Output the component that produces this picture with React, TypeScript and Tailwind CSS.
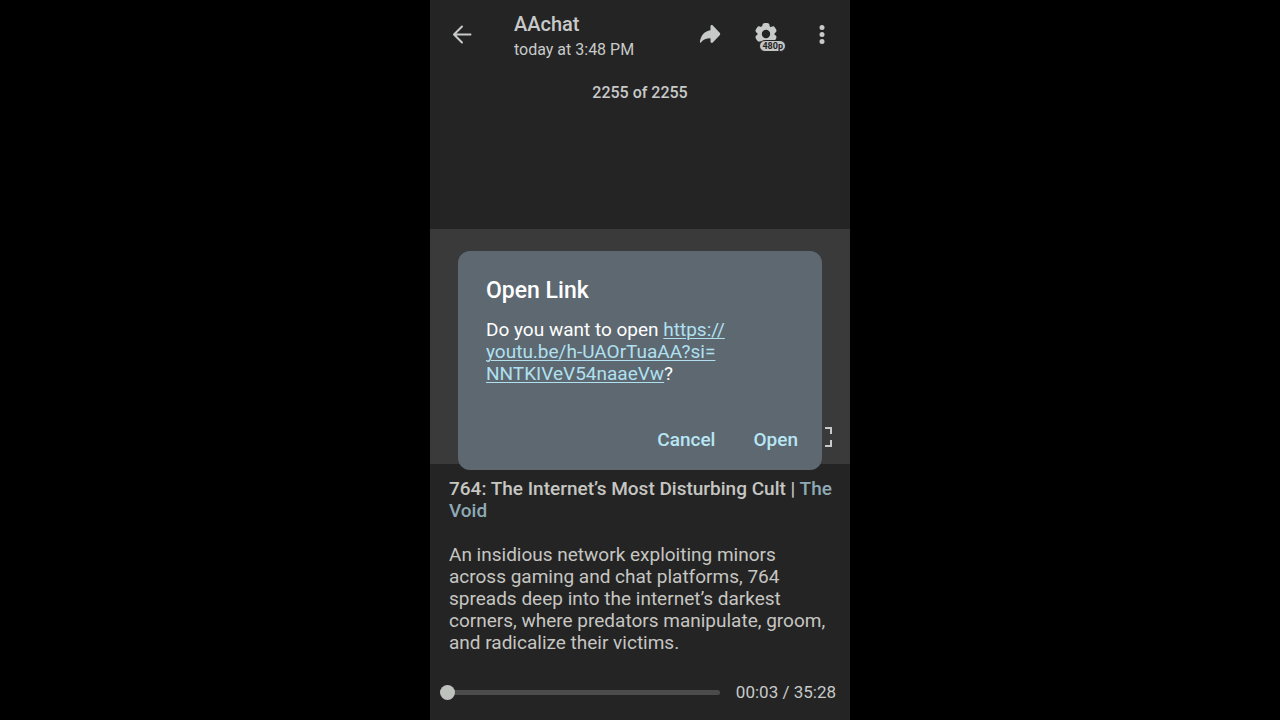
import React, { useState } from 'react';

const DURATION = 35 * 60 + 28;

function formatTime(seconds: number) {
  const m = Math.floor(seconds / 60);
  const s = seconds % 60;
  return `${String(m).padStart(2, '0')}:${String(s).padStart(2, '0')}`;
}

function BackIcon() {
  return (
    <svg width="20" height="20" viewBox="0 0 20 20" fill="none" stroke="currentColor" strokeWidth="2" strokeLinecap="round" strokeLinejoin="round">
      <path d="M18.500 10.500H2.500M10 2.500L2 10.500l8 8" />
    </svg>
  );
}

function ShareIcon() {
  return (
    <svg width="22" height="20" viewBox="0 0 22 20" fill="currentColor">
      <path d="M11.500 2.500c0-1.300 1.400-1.800 2.300-1l6.900 7.300c.7.7.7 1.700 0 2.400l-6.900 7.300c-.9.800-2.300.3-2.300-1v-3.200c-4.300 0-7.300 1.200-9.600 4.200-.4.500-1.100.2-1-.4C1.500 12.300 5 7 11.500 6.200z" />
    </svg>
  );
}

const TEETH = [0, 60, 120, 180, 240, 300];

function GearIcon() {
  return (
    <svg width="24" height="24" viewBox="-12 -12 24 24" fill="currentColor">
      <circle r="6.400" fill="none" stroke="currentColor" strokeWidth="4.400" />
      {TEETH.map((angle) => (
        <rect key={angle} x="-3.600" y="-11" width="7.200" height="6" rx="2.600" transform={`rotate(${angle})`} />
      ))}
    </svg>
  );
}

function MoreIcon() {
  return (
    <svg width="20" height="20" viewBox="0 0 20 20" fill="currentColor">
      <circle cx="10" cy="3.500" r="2.500" />
      <circle cx="10" cy="10.500" r="2.500" />
      <circle cx="10" cy="17.500" r="2.500" />
    </svg>
  );
}

function FullscreenIcon() {
  return (
    <svg width="20" height="20" viewBox="0 0 20 20" fill="none" stroke="currentColor" strokeWidth="2">
      <path d="M1 7V1h6M13 1h6v6M19 13v6h-6M7 19H1v-6" />
    </svg>
  );
}

function Header() {
  const iconButton = 'relative flex h-14 w-14 items-center justify-center';
  return (
    <header className="flex h-[68px] items-center pl-1">
      <button aria-label="Back" className={iconButton}>
        <BackIcon />
      </button>
      <div className="min-w-0 flex-1 pt-1.5 pl-6">
        <h1 className="text-xl leading-[25px] font-medium">AAchat</h1>
        <p className="text-base leading-[25px]">today at 3:48 PM</p>
      </div>
      <button aria-label="Share" className={iconButton}>
        <ShareIcon />
      </button>
      <button aria-label="Video quality" className={iconButton}>
        <GearIcon />
        <span className="absolute right-2 bottom-2.5 rounded-full border border-[#242424] bg-[#c4c6c5] px-0.5 text-[9px] leading-[10px] font-bold text-[#242424]">
          480p
        </span>
      </button>
      <button aria-label="More options" className={iconButton}>
        <MoreIcon />
      </button>
    </header>
  );
}

function Caption() {
  return (
    <section className="pt-3.5 pr-3.5 pb-2.5 pl-[19px] text-[19px] leading-[22px] text-[#c6c6c2]">
      <p className="font-medium">
        764: The Internet’s Most Disturbing Cult | <a href="#the-void" className="text-[#8eaab4]">The Void</a>
      </p>
      <p className="mt-[22px] pr-1">
        An insidious network exploiting minors across gaming and chat platforms, 764 spreads deep into the
        internet’s darkest corners, where predators manipulate, groom, and radicalize their victims.
      </p>
    </section>
  );
}

function PlayerControls() {
  const [time, setTime] = useState(3);
  return (
    <footer className="flex h-14 items-center gap-4 pr-[14px] pl-[10px]">
      <input
        type="range"
        aria-label="Seek"
        min={3}
        max={DURATION}
        value={time}
        onChange={(e) => setTime(Number(e.target.value))}
        className="h-4 min-w-0 flex-1 appearance-none bg-transparent [&::-webkit-slider-runnable-track]:h-[5px] [&::-webkit-slider-runnable-track]:rounded-full [&::-webkit-slider-runnable-track]:bg-[#4b4b4b] [&::-webkit-slider-thumb]:-mt-[5px] [&::-webkit-slider-thumb]:h-[15px] [&::-webkit-slider-thumb]:w-[15px] [&::-webkit-slider-thumb]:appearance-none [&::-webkit-slider-thumb]:rounded-full [&::-webkit-slider-thumb]:bg-[#bfc1bf]"
      />
      <span className="text-[17px] leading-[22px]">
        {formatTime(time)} / {formatTime(DURATION)}
      </span>
    </footer>
  );
}

function OpenLinkDialog({ onClose }: { onClose: () => void }) {
  return (
    <div className="absolute inset-0 flex items-center justify-center px-7 pt-px">
      <div
        role="dialog"
        aria-labelledby="open-link-title"
        className="w-full rounded-xl bg-[#5d6871] pt-6 pb-2.5 text-white"
      >
        <h2 id="open-link-title" className="px-7 text-[23px] leading-8 font-medium">
          Open Link
        </h2>
        <p className="mt-3 px-7 text-[19px] leading-[22px]">
          Do you want to open{' '}
          <a href="https://youtu.be/h-UAOrTuaAA?si=NNTKIVeV54naaeVw" className="text-[#b0e0f0] underline decoration-1 underline-offset-2">
            https://
            <br />
            youtu.be/h-UAOrTuaAA?si=
            <br />
            NNTKIVeV54naaeVw
          </a>
          ?
        </p>
        <div className="mt-[35px] flex justify-end gap-3.5 pr-3 text-[19px] font-medium text-[#b8e6f4]">
          <button onClick={onClose} className="h-10 px-3">Cancel</button>
          <button onClick={onClose} className="h-10 px-3">Open</button>
        </div>
      </div>
    </div>
  );
}

export default function App() {
  const [dialogOpen, setDialogOpen] = useState(true);

  return (
    <div className="min-h-screen bg-black font-[Roboto,sans-serif]">
      <main className="relative mx-auto flex min-h-screen max-w-[420px] flex-col bg-[#242424] text-[#c8caca]">
        <Header />
        <p className="pt-[13px] text-center text-base leading-6 font-medium">2255 of 2255</p>
        <div className="flex-1" />
        <div className="flex aspect-[420/235] items-end justify-end bg-[#3a3a3a] pr-[18px] pb-[17px]">
          <button aria-label="Full screen">
            <FullscreenIcon />
          </button>
        </div>
        <Caption />
        <PlayerControls />
        {dialogOpen && <OpenLinkDialog onClose={() => setDialogOpen(false)} />}
      </main>
    </div>
  );
}
